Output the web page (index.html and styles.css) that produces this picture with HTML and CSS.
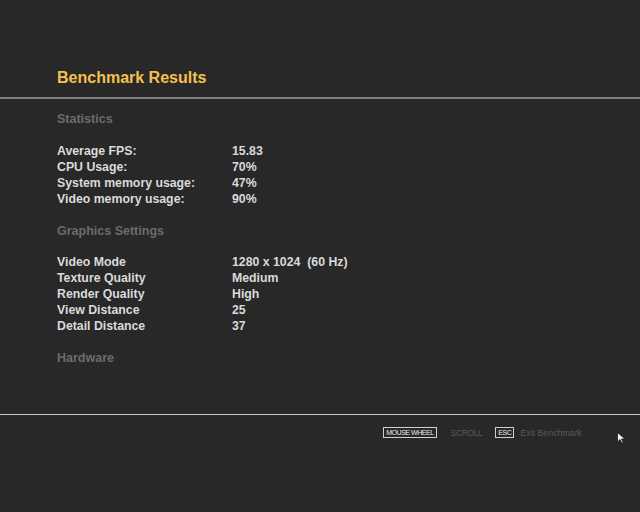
FILE: index.html
```html
<!DOCTYPE html>
<html lang="en">
<head>
    <meta charset="UTF-8">
    <meta name="viewport" content="width=device-width, initial-scale=1.0">
    <title>Benchmark Results</title>
    <link rel="stylesheet" href="styles.css">
</head>
<body>
    <div class="screen">
        <div class="header">
            <h1 class="title">Benchmark Results</h1>
        </div>
        <div class="content">
            <div class="section">
                <h2 class="section-title">Statistics</h2>
                <ul class="rows">
                    <li class="row"><span class="label">Average FPS:</span><span class="value">15.83</span></li>
                    <li class="row"><span class="label">CPU Usage:</span><span class="value">70%</span></li>
                    <li class="row"><span class="label">System memory usage:</span><span class="value">47%</span></li>
                    <li class="row"><span class="label">Video memory usage:</span><span class="value">90%</span></li>
                </ul>
            </div>
            <div class="section">
                <h2 class="section-title compact">Graphics Settings</h2>
                <ul class="rows">
                    <li class="row"><span class="label">Video Mode</span><span class="value">1280 x 1024&nbsp;&nbsp;(60 Hz)</span></li>
                    <li class="row"><span class="label">Texture Quality</span><span class="value">Medium</span></li>
                    <li class="row"><span class="label">Render Quality</span><span class="value">High</span></li>
                    <li class="row"><span class="label">View Distance</span><span class="value">25</span></li>
                    <li class="row"><span class="label">Detail Distance</span><span class="value">37</span></li>
                </ul>
            </div>
            <div class="section">
                <h2 class="section-title">Hardware</h2>
            </div>
        </div>
        <div class="footer">
            <div class="hint">
                <span class="key">MOUSE WHEEL</span>
                <span class="hint-text scroll">SCROLL</span>
            </div>
            <div class="hint">
                <span class="key">ESC</span>
                <span class="hint-text">Exit Benchmark</span>
            </div>
        </div>
        <svg class="cursor" width="9" height="12" viewBox="0 0 9 12">
            <path d="M0.5 0.5 L0.5 10 L3 7.6 L4.8 11.3 L6.2 10.6 L4.5 7 L8 7 Z" fill="#f2f2f2" stroke="#1a1a1a" stroke-width="0.8"/>
        </svg>
    </div>
</body>
</html>
```

FILE: styles.css
```css
*{
    margin: 0;
    padding: 0;
    box-sizing: border-box;
}

li{
    list-style: none;
}

html, body{
    height: 100%;
}

body{
    background: #282828;
    font-family: "Liberation Sans", Arial, sans-serif;
}

.screen{
    position: relative;
    display: flex;
    flex-direction: column;
    height: 512px;
}

.header{
    padding: 68px 57px 9px;
    border-bottom: 2px solid #808080;
}

.title{
    font-size: 16px;
    line-height: 20px;
    font-weight: bold;
    color: #f6c04c;
}

.content{
    flex: 1;
    padding: 12px 57px 0;
}

.section{
    margin-bottom: 16px;
}

.section-title{
    font-size: 12.5px;
    line-height: 16px;
    font-weight: bold;
    color: #6b6b6b;
    margin-bottom: 16px;
}

.section-title.compact{
    margin-bottom: 15px;
}

.row{
    display: flex;
    font-size: 12.3px;
    line-height: 16px;
    font-weight: bold;
    color: #dadada;
}

.label{
    width: 175px;
}

.footer{
    height: 98px;
    border-top: 1px solid #c8c8c8;
    display: flex;
    justify-content: flex-end;
    align-items: flex-start;
    gap: 13px;
    padding: 12px 58px 0 0;
}

.hint{
    display: flex;
    align-items: center;
    gap: 6px;
}

.key{
    border: 1px solid #d0d0d0;
    color: #e8e8e8;
    font-size: 7px;
    line-height: 9px;
    padding: 0 2px;
    letter-spacing: -0.45px;
}

.hint-text{
    font-size: 8.8px;
    line-height: 10px;
    color: #5a5a5a;
}

.scroll{
    font-size: 8.5px;
    letter-spacing: -0.4px;
    margin-left: 8px;
}

.cursor{
    position: absolute;
    left: 617px;
    top: 432px;
}
```
